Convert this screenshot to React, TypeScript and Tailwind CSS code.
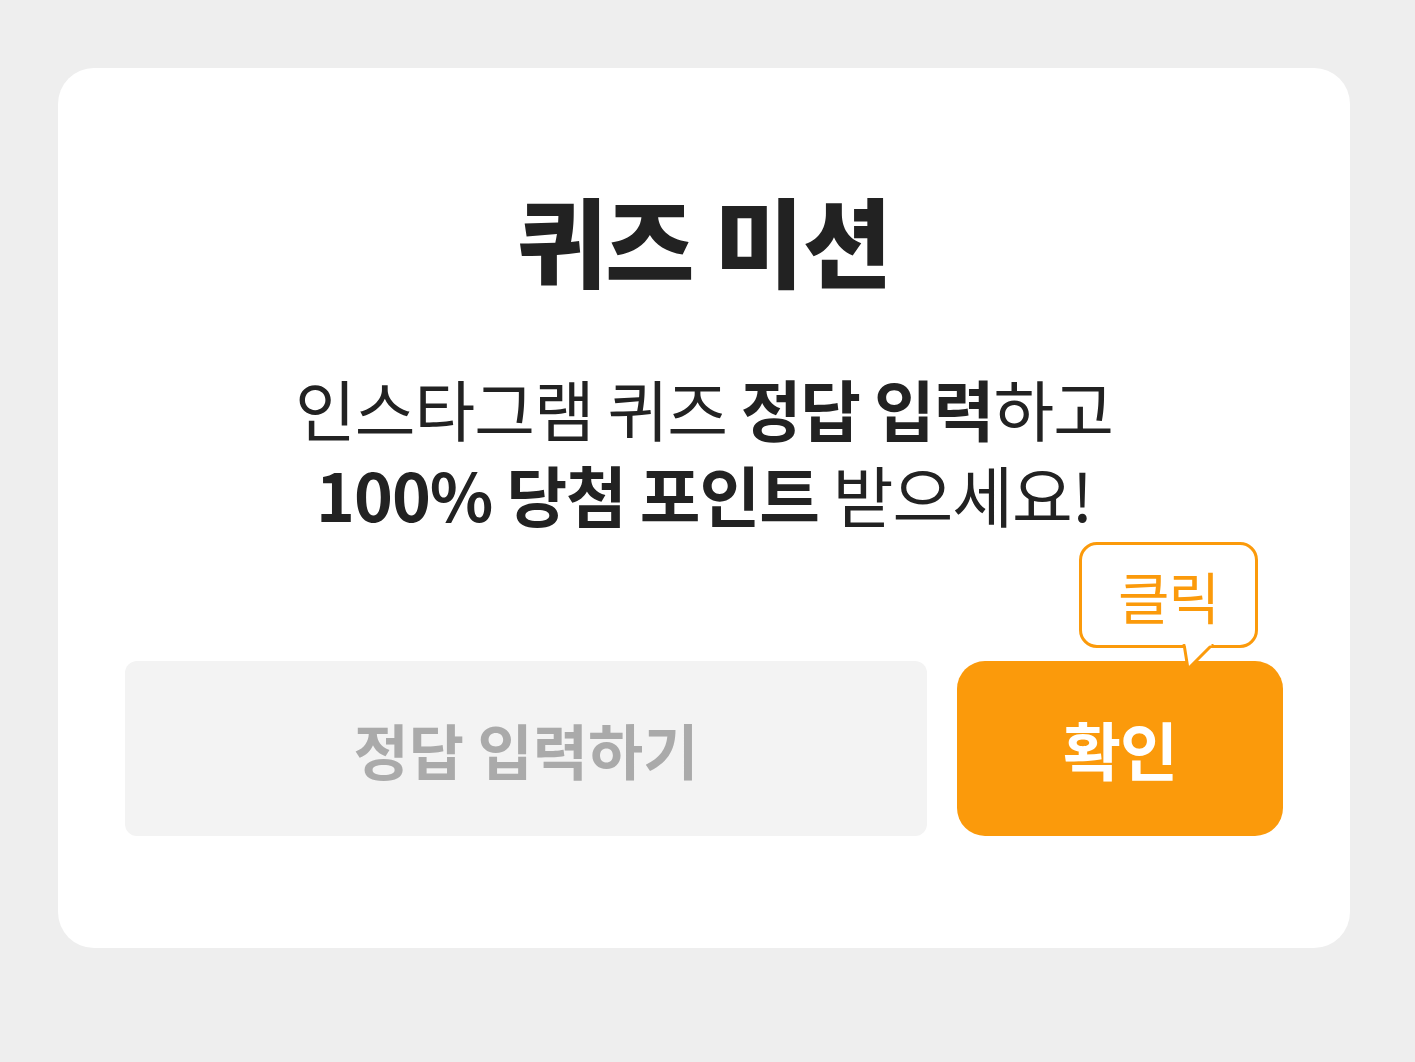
export default function App() {
  const font = { fontFamily: '"Noto Sans CJK KR", "Noto Sans", sans-serif' };
  return (
    <main
      style={font}
      className="min-h-[1062px] bg-[#eeeeee] pl-[58px] pr-[65px] pt-[68px] pb-[114px] text-[#222222]"
    >
      <section className="flex h-[880px] flex-col items-center rounded-[36px] bg-white px-[67px]">
        <h1 className="mt-[110px] text-[97px] font-extrabold leading-[120px] tracking-[-1px]">퀴즈 미션</h1>
        <p className="mt-[66px] text-center text-[66px] leading-[86px] tracking-[-1px]">
          인스타그램 퀴즈 <strong className="font-bold">정답 입력</strong>하고
          <br />
          <strong className="font-bold">100% 당첨 포인트</strong> 받으세요!
        </p>
        <div className="relative mt-[125px] flex w-full gap-[30px]">
          <div className="flex h-[175px] flex-1 items-center justify-center rounded-[12px] bg-[#f3f3f3] text-[60px] font-bold text-[#aaaaaa]">
            정답 입력하기
          </div>
          <button className="relative flex h-[175px] w-[326px] items-center justify-center rounded-[28px] bg-[#fb9a0b] text-[63px] font-bold tracking-[-1px] text-white">
            확인
            <span className="absolute bottom-[188px] left-[122px] flex h-[106px] w-[179px] items-center justify-center rounded-[18px] border-[3px] border-[#fb9a0b] bg-white text-[56px] font-normal tracking-[-1px] text-[#fb9a0b]">
              클릭
              <svg
                className="absolute left-[100px] top-[99px]"
                width="40"
                height="30"
                viewBox="0 0 40 30"
              >
                <path d="M2 0 L6 25 L31 0" fill="white" stroke="#fb9a0b" strokeWidth="3" strokeLinejoin="round" />
                <rect x="3.5" y="-2" width="26" height="3.5" fill="white" />
              </svg>
            </span>
          </button>
        </div>
      </section>
    </main>
  );
}
